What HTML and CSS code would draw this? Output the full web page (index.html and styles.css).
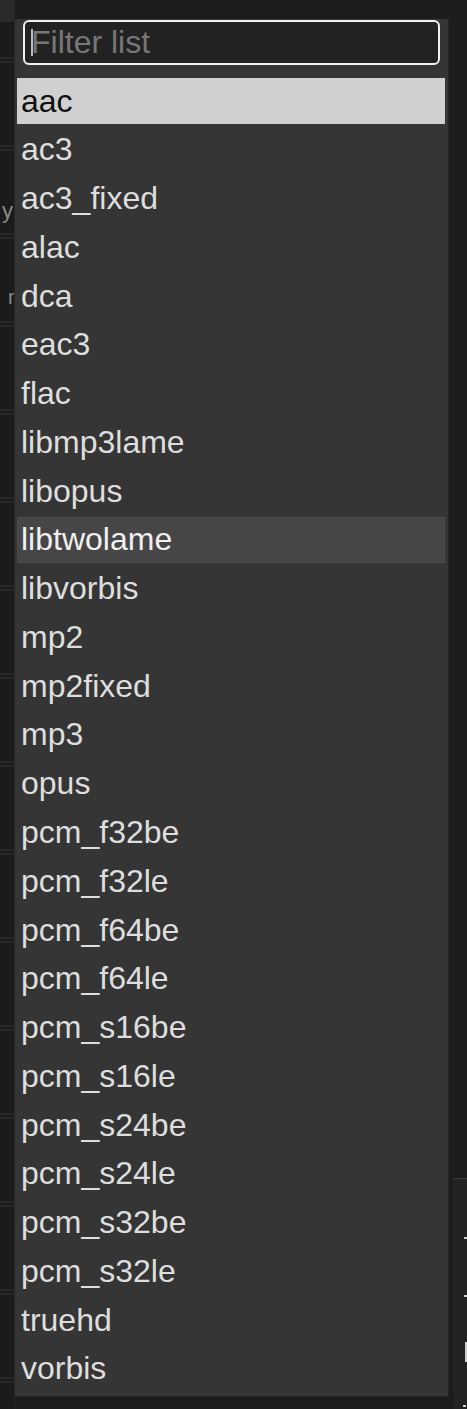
FILE: index.html
```html
<!DOCTYPE html>
<html>
<head>
<meta charset="utf-8">
<link rel="stylesheet" href="styles.css">
</head>
<body>
<div class="page">
  <div class="left-strip">
    <span class="frag frag-y">y</span>
    <span class="frag frag-r">r</span>
  </div>
  <div class="menu">
    <div class="filter">
      <input class="filter-input" type="text" placeholder="Filter list">
      <span class="caret"></span>
    </div>
    <ul class="items">
      <li class="item selected">aac</li>
      <li class="item">ac3</li>
      <li class="item">ac3_fixed</li>
      <li class="item">alac</li>
      <li class="item">dca</li>
      <li class="item">eac3</li>
      <li class="item">flac</li>
      <li class="item">libmp3lame</li>
      <li class="item">libopus</li>
      <li class="item hover">libtwolame</li>
      <li class="item">libvorbis</li>
      <li class="item">mp2</li>
      <li class="item">mp2fixed</li>
      <li class="item">mp3</li>
      <li class="item">opus</li>
      <li class="item">pcm_f32be</li>
      <li class="item">pcm_f32le</li>
      <li class="item">pcm_f64be</li>
      <li class="item">pcm_f64le</li>
      <li class="item">pcm_s16be</li>
      <li class="item">pcm_s16le</li>
      <li class="item">pcm_s24be</li>
      <li class="item">pcm_s24le</li>
      <li class="item">pcm_s32be</li>
      <li class="item">pcm_s32le</li>
      <li class="item">truehd</li>
      <li class="item">vorbis</li>
    </ul>
  </div>
  <div class="right-strip">
    <div class="right-grid"></div>
    <div class="right-panel">
      <span class="dot d1"></span>
      <span class="dot d2"></span>
      <span class="dot d3"></span>
      <span class="dot d4"></span>
    </div>
  </div>
</div>
</body>
</html>
```

FILE: styles.css
```css
html, body {
  margin: 0;
  padding: 0;
  background: #1c1c1c;
  width: 467px;
  height: 1409px;
  overflow: hidden;
  font-family: "Liberation Sans", Arial, sans-serif;
}

.page {
  display: flex;
  height: 1409px;
}

.left-strip {
  width: 14px;
  flex: none;
  position: relative;
  background:
    linear-gradient(#2a2a2a, #2a2a2a) 0 0 / 100% 22px no-repeat,
    repeating-linear-gradient(to bottom,
      #1b1b1b 0, #1b1b1b 57px,
      #282828 57px, #282828 59px,
      #1b1b1b 59px, #1b1b1b 61px,
      #282828 61px, #282828 63px,
      #1b1b1b 63px, #1b1b1b 88px);
  border-right: 1px solid #262626;
  overflow: hidden;
}

.frag {
  position: absolute;
  color: #8a8a8a;
  font-size: 22px;
  line-height: 1;
}
.frag-y { left: 2px; top: 200px; }
.frag-r { left: 8px; top: 287px; font-size: 20px; }

.menu {
  width: 434px;
  flex: none;
  margin-top: 19px;
  height: 1378px;
  background: #353535;
  box-sizing: border-box;
  border-right: 1px solid #262626;
  border-bottom: 1px solid #262626;
  padding: 1px 0 0 0;
}

.filter {
  position: relative;
  margin: 0 8px 0 8px;
}

.filter-input {
  display: block;
  box-sizing: border-box;
  width: 417px;
  height: 45px;
  background: #222;
  border: 2px solid #f0f0f0;
  border-radius: 6px;
  padding: 0 0 0 6px;
  font-family: inherit;
  font-size: 32px;
  color: #ddd;
  outline: none;
}
.filter-input::placeholder {
  color: #777;
}

.caret {
  position: absolute;
  left: 8px;
  top: 9px;
  width: 2px;
  height: 27px;
  background: #bbb;
}

.items {
  list-style: none;
  margin: 13px 0 0 0;
  padding: 0 3px 0 2px;
}

.item {
  height: 46px;
  margin-bottom: 2.77px;
  padding-left: 4px;
  box-sizing: border-box;
  display: flex;
  align-items: center;
  font-size: 32px;
  color: #dedede;
  white-space: nowrap;
}

.item.selected {
  background: #d0d0d0;
  color: #111;
}

.item.hover {
  background: #464646;
  box-shadow: inset 0 0 0 1px #4b4b4b;
  color: #f0f0f0;
}

.right-strip {
  flex: 1;
  display: flex;
  flex-direction: column;
}

.right-grid {
  flex: none;
  height: 1178px;
  background:
    repeating-linear-gradient(to right, #1c1c1c 0, #1c1c1c 9px, #222 9px, #222 10px),
    #1c1c1c;
}

.right-panel {
  flex: 1;
  position: relative;
  margin-left: 3px;
  background: #232323;
  border-top: 1px solid #3a3a3a;
  border-left: 1px solid #1a1a1a;
}

.dot {
  position: absolute;
  background: #cfcfcf;
  width: 3px;
  height: 2px;
}
.d1 { left: 11px; top: 58px; }
.d2 { left: 11px; top: 116px; }
.d3 { left: 12px; top: 163px; width: 3px; height: 20px; }
.d4 { left: 10px; top: 226px; }
```
